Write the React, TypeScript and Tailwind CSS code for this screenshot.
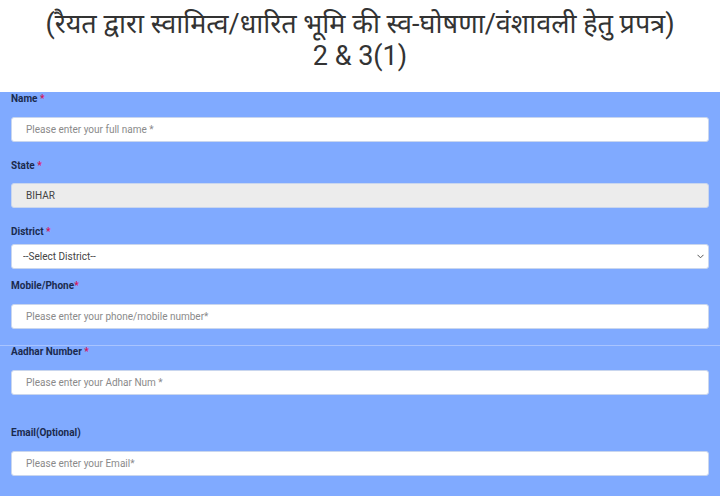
import React from "react";

function Label({ text, required, tight }: { text: string; required?: boolean; tight?: boolean }) {
  return (
    <label className="block text-[10px] font-bold leading-[12px] text-[#1b2a4e]">
      {text}
      {required && <span className="text-[#d4145a]">{tight ? "*" : " *"}</span>}
    </label>
  );
}

function TextInput({ placeholder, value, disabled }: { placeholder?: string; value?: string; disabled?: boolean }) {
  return (
    <input
      type="text"
      readOnly
      disabled={disabled}
      placeholder={placeholder}
      defaultValue={value}
      className={`block h-[25px] w-full rounded-[3px] border border-[#c9d6ee] px-[14px] text-[10px] text-[#444] outline-none placeholder:text-[#8a8a8a] ${
        disabled ? "bg-[#ececec]" : "bg-white"
      }`}
    />
  );
}

export default function App() {
  return (
    <div className="min-h-[496px] w-[720px] bg-[#80aaff]" style={{ fontFamily: "Roboto, 'Noto Sans', sans-serif" }}>
      <header className="flex h-[92px] flex-col items-center bg-white pt-[10px] text-center text-[27px] leading-[29px] text-[#333]">
        <h1 className="font-normal">(रैयत द्वारा स्वामित्व/धारित भूमि की स्व-घोषणा/वंशावली हेतु प्रपत्र)</h1>
        <h1 className="mt-[3px] font-normal">2 &amp; 3(1)</h1>
      </header>

      <form className="px-[11px]">
        <div className="pt-[1px]">
          <Label text="Name" required />
          <div className="mt-[12px]">
            <TextInput placeholder="Please enter your full name *" />
          </div>
        </div>

        <div className="pt-[18px]">
          <Label text="State" required />
          <div className="mt-[11px]">
            <TextInput value="BIHAR" disabled />
          </div>
        </div>

        <div className="pt-[18px]">
          <Label text="District" required />
          <div className="relative mt-[6px]">
            <select className="block h-[25px] w-full appearance-none rounded-[3px] border border-[#c9d6ee] bg-white px-[11px] text-[10px] text-[#444] outline-none">
              <option>--Select District--</option>
            </select>
            <svg className="pointer-events-none absolute right-[5px] top-[10px]" width="7" height="5" viewBox="0 0 7 5">
              <path d="M0.5 0.8 L3.5 3.8 L6.5 0.8" fill="none" stroke="#555" strokeWidth="1" />
            </svg>
          </div>
        </div>

        <div className="pt-[11px]">
          <Label text="Mobile/Phone" required tight />
          <div className="mt-[12px]">
            <TextInput placeholder="Please enter your phone/mobile number*" />
          </div>
        </div>
      </form>

      <div className="mt-[16px] border-t border-[#a9c4ff] px-[11px]">
        <Label text="Aadhar Number" required />
        <div className="mt-[12px]">
          <TextInput placeholder="Please enter your Adhar Num *" />
        </div>

        <div className="pt-[32px]">
          <Label text="Email(Optional)" />
          <div className="mt-[12px]">
            <TextInput placeholder="Please enter your Email*" />
          </div>
        </div>
      </div>
    </div>
  );
}
